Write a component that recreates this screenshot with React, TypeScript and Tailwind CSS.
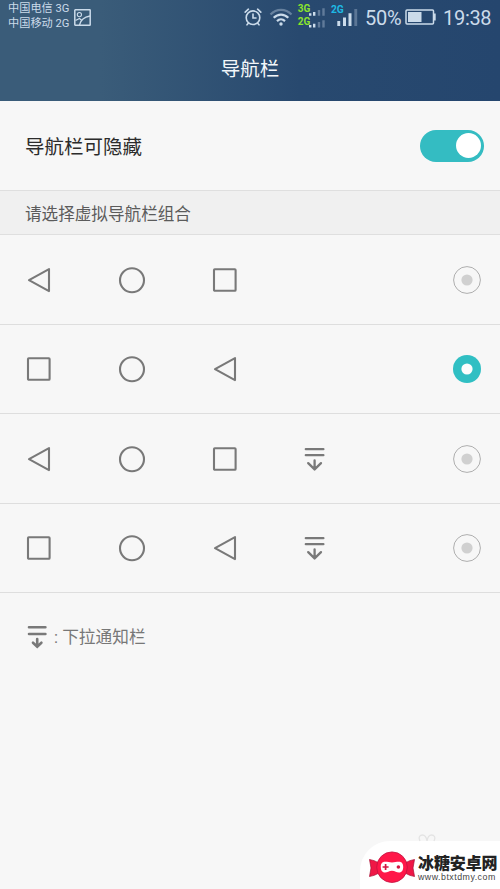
import React, { useState } from 'react'

type NavKey = 'back' | 'home' | 'recent' | 'pull'

const COMBOS: NavKey[][] = [
  ['back', 'home', 'recent'],
  ['recent', 'home', 'back'],
  ['back', 'home', 'recent', 'pull'],
  ['recent', 'home', 'back', 'pull']
]

function NavIcon({ name }: { name: NavKey }) {
  return (
    <svg
      viewBox="0 0 28 28"
      className="size-7 shrink-0"
      fill="none"
      stroke="#797979"
      strokeWidth="2.1"
      strokeLinejoin="round"
      strokeLinecap="round"
    >
      {name === 'back' && <path d="M4 14.2 24 3.1V25.1Z" />}
      {name === 'home' && <circle cx="14" cy="14.2" r="12" />}
      {name === 'recent' && <rect x="3" y="3.2" width="21.6" height="21.6" rx="0.8" />}
      {name === 'pull' && (
        <path d="M5.8 4.2H23.4M5.8 10.2H23.4M14.6 15.5V24.5M8.2 18.1 14.6 24.4 21 18.1" strokeWidth="2.3" />
      )}
    </svg>
  )
}

function Radio({ checked, onSelect }: { checked: boolean; onSelect: () => void }) {
  return (
    <button type="button" role="radio" aria-checked={checked} onClick={onSelect} className="size-7 shrink-0">
      <svg viewBox="0 0 28 28" className="size-7">
        {checked ? (
          <>
            <circle cx="14" cy="14" r="14" fill="#30bfc3" />
            <circle cx="14" cy="14" r="5.6" fill="#fbfdfd" />
          </>
        ) : (
          <>
            <circle cx="14" cy="14" r="13.4" fill="none" stroke="#aeaeae" />
            <circle cx="14" cy="14" r="5.6" fill="#d0d0d0" />
          </>
        )}
      </svg>
    </button>
  )
}

function StatusBar() {
  return (
    <div className="flex h-9 items-start pl-[8px] text-[#cbdbea]">
      <div className="w-[66px] shrink-0 whitespace-nowrap pt-px text-[11.2px] leading-[15px]">
        <div>中国电信 3G</div>
        <div>中国移动 2G</div>
      </div>
      <svg viewBox="0 0 17 17" className="mt-[9px] size-[17px] shrink-0" fill="none" stroke="currentColor" strokeWidth="1.5">
        <rect x="0.8" y="0.8" width="15.4" height="15.4" rx="0.5" />
        <circle cx="5.4" cy="5.6" r="2.1" strokeWidth="1.1" />
        <path d="M1.5 11.5 5.5 9.5 8 11.5M5.5 16C6.5 11.5 10 8 16 7" strokeWidth="1.3" />
      </svg>

      <svg viewBox="0 0 18 18" className="ml-[153px] mt-2 size-[18px] shrink-0" fill="none" stroke="currentColor" strokeWidth="1.6" strokeLinecap="round">
        <circle cx="9" cy="9.7" r="6.8" />
        <path d="M1.2 4.2 4.4 1.2M16.8 4.2 13.6 1.2M9 6V10H12M4.3 15.2 3 16.8M13.7 15.2 15 16.8" />
      </svg>
      <svg viewBox="0 0 24 18" className="ml-[7px] mt-2 h-[18px] w-6 shrink-0" fill="none" stroke="currentColor" strokeWidth="2.2">
        <path d="M1.5 6.5C7.5.3 16.5.3 22.5 6.5" opacity="0.38" />
        <path d="M4.7 9.8C9 5.5 15 5.5 19.3 9.8M8 13.1C10.4 10.8 13.6 10.8 16 13.1" />
        <circle cx="12" cy="16" r="1.7" fill="currentColor" stroke="none" />
      </svg>
      <svg viewBox="0 0 30 26" className="ml-[4px] mt-[3px] h-[26px] w-[30px] shrink-0" fill="currentColor">
        <g fill="#8ae42c" fontFamily="Roboto, sans-serif" fontSize="10" fontWeight="700">
          <text x="0.8" y="9.3">3G</text>
          <text x="0.8" y="21.5">2G</text>
        </g>
        <path d="M12 10.3H14.4V12.8H12ZM16 9H18.4V12.8H16ZM12 22H14.4V24.5H12ZM16 20.7H18.4V24.5H16Z" />
        <path d="M20.8 7H23.2V12.8H20.8ZM25.3 5.3H27.7V12.8H25.3ZM20.8 19H23.2V24.5H20.8ZM25.3 17.2H27.7V24.5H25.3Z" opacity="0.35" />
      </svg>
      <svg viewBox="0 0 28 26" className="ml-[3px] mt-[3px] h-[26px] w-7 shrink-0" fill="currentColor">
        <text x="0.9" y="9.5" fill="#1eb9e4" fontFamily="Roboto, sans-serif" fontSize="10.2" fontWeight="700">
          2G
        </text>
        <path d="M7.3 18H10.2V23H7.3ZM13 14.5H16V23H13ZM18.5 10.3H21.5V23H18.5Z" />
        <path d="M24.3 6H27.2V23H24.3Z" opacity="0.32" />
      </svg>
      <span className="ml-[7px] mt-[6px] w-[40px] shrink-0 whitespace-nowrap text-[20px] leading-6 tracking-[-0.3px]">50%</span>
      <svg viewBox="0 0 32 16" className="mt-[9px] h-4 w-8 shrink-0">
        <rect x="1" y="1" width="27.5" height="14" rx="1" fill="none" stroke="currentColor" strokeWidth="1.5" />
        <path d="M29 4.5H30.7V11.5H29Z" fill="currentColor" />
        <rect x="3" y="3" width="13.5" height="10" fill="currentColor" />
      </svg>
      <span className="ml-[6px] mt-[6px] whitespace-nowrap text-[20px] leading-6 tracking-[-0.3px]">19:38</span>
    </div>
  )
}

function SiteBadge() {
  return (
    <div className="absolute bottom-0 right-0 flex h-12 w-[140px] items-center rounded-tl-[30px] bg-white">
      <svg viewBox="0 0 18 10" className="absolute -top-[7px] left-[58px] h-2.5 w-[18px]" fill="none" stroke="#e4e4e4" strokeWidth="1.3">
        <path d="M2 7C0 3 2 1 4.5 1S8.5 4 9 7C9.5 4 11 1 13.5 1S18 3 16 7" />
      </svg>
      <svg viewBox="0 0 46 32" className="ml-[9px] mt-[3px] h-8 w-[46px] shrink-0">
        <path d="M.5 8.5Q5 9 10 12V22Q5 25 .5 25.5L2 17ZM45.5 8.5Q41 9 36 12V22Q41 25 45.5 25.5L44 17Z" fill="#ef1746" stroke="#a60f34" strokeWidth="0.7" />
        <circle cx="23" cy="16.2" r="15.3" fill="#ff1749" stroke="#c31240" strokeWidth="0.8" />
        <path d="M16 10.8C19 10.8 20 11.5 23 11.5S27 10.8 30 10.8C33 10.8 34.2 13 34.2 16S33 21.5 30 21.5C27.5 21.5 26 19.7 23 19.7S18.5 21.5 16 21.5C13 21.5 11.8 19 11.8 16S13 10.8 16 10.8Z" fill="#fff" />
        <path d="M16.6 13V19M13.6 16H19.6" stroke="#d31642" strokeWidth="1.7" />
        <circle cx="29.4" cy="16" r="1.8" fill="#d31642" />
      </svg>
      <div className="ml-[3px] whitespace-nowrap">
        <div className="mt-[6px] text-[16px] font-black leading-[18px] tracking-[-0.1px] text-[#222]">冰糖安卓网</div>
        <div className="font-['Liberation_Sans',sans-serif] text-[8.8px] leading-[9px] tracking-[0.5px] text-[#444]">www.btxtdmy.com</div>
      </div>
    </div>
  )
}

export default function App() {
  const [hideable, setHideable] = useState(true)
  const [selected, setSelected] = useState(1)

  return (
    <div className="relative h-[889px] w-[500px] overflow-hidden bg-[#f7f7f7] font-[Roboto,'Noto_Sans_CJK_SC',sans-serif]">
      <header className="h-[101px] bg-linear-to-r from-[#3a5c79] from-20% via-[#28496f] via-60% to-[#25466e]">
        <StatusBar />
        <h1 className="pt-[19px] text-center text-[19.5px] leading-[30px] text-[#f3f7fa]">导航栏</h1>
      </header>

      <div className="flex h-[89px] items-center justify-between pl-[25px] pr-[16.5px]">
        <span className="mt-1 text-[19.5px] text-[#2c2c2c]">导航栏可隐藏</span>
        <button
          type="button"
          role="switch"
          aria-checked={hideable}
          onClick={() => setHideable(!hideable)}
          className={`flex h-8 w-16 items-center rounded-full px-[3px] ${hideable ? 'justify-end bg-[#34bcc2]' : 'justify-start bg-[#c4c4c4]'}`}
        >
          <span className="size-[25px] rounded-full bg-white" />
        </button>
      </div>

      <div className="flex h-[45px] items-center border-y border-[#dfdfdf] bg-[#f0f0f0] pl-[25px] text-[16.6px] text-[#5b5b5b]">
        <span className="mt-1.5">请选择虚拟导航栏组合</span>
      </div>

      <div role="radiogroup">
        {COMBOS.map((keys, i) => (
          <div key={i} className="flex h-[89.5px] items-center border-b border-[#dedede] pl-[25px] pr-[19.5px] pt-px">
            <div className="grid grid-cols-[93px_93px_89px_28px]">
              {keys.map((key) => (
                <NavIcon key={key} name={key} />
              ))}
            </div>
            <div className="ml-auto flex">
              <Radio checked={selected === i} onSelect={() => setSelected(i)} />
            </div>
          </div>
        ))}
      </div>

      <div className="flex items-center pl-[27px] pt-[28px] text-[16.7px] leading-7 text-[#777]">
        <svg viewBox="0 0 20 24" className="h-6 w-5" fill="none" stroke="#797979" strokeWidth="2.6" strokeLinecap="round">
          <path d="M2 2.3H18.4M2 9H18.4M10.2 14V21.5M6 17.7 10.2 21.7 14.4 17.7" />
        </svg>
        <span className="ml-[7px] mt-[3px] whitespace-pre">: 下拉通知栏</span>
      </div>

      <SiteBadge />
    </div>
  )
}
